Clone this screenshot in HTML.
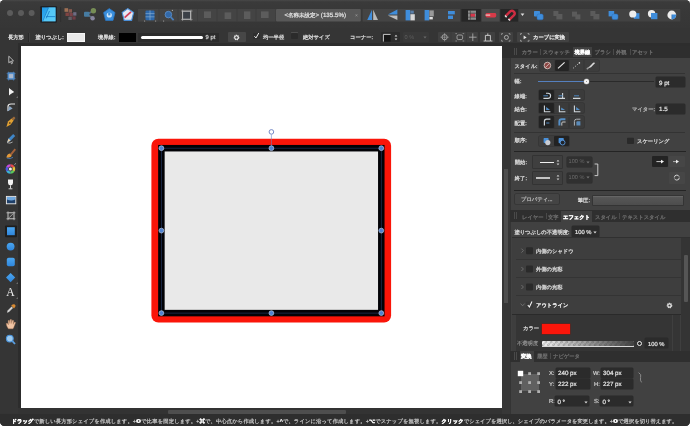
<!DOCTYPE html>
<html lang="ja"><head><meta charset="utf-8"><title>Affinity Designer</title>
<style>
html,body{margin:0;padding:0;background:#fff;}
body{width:690px;height:426px;overflow:hidden;position:relative;font-family:"Liberation Sans",sans-serif;}
#win{position:absolute;left:0;top:0;width:690px;height:426px;border-radius:4.5px;background:#343434;overflow:hidden;opacity:0.999;will-change:transform;}
.a{position:absolute;}
.t{position:absolute;white-space:nowrap;font-size:5.3px;line-height:8px;height:8px;color:#dadada;letter-spacing:0px;text-rendering:geometricPrecision;-webkit-text-stroke:0.26px currentColor;-webkit-font-smoothing:antialiased;}
.n{position:absolute;white-space:nowrap;font-size:6.2px;line-height:8px;height:8px;color:#e8e8e8;-webkit-text-stroke:0.2px currentColor;text-rendering:geometricPrecision;}
.b{font-weight:bold;color:#fff;}
.dim{color:#8a8a8a;}
.fld{position:absolute;background:#2b2b2b;border-radius:1px;box-shadow:0 0 0 0.5px #2a2a2a;}
.btn{position:absolute;background:#474747;border-radius:1px;}
.sel{position:absolute;background:#222;border-radius:1px;}
.sep{position:absolute;height:1px;background:#262626;}
svg{position:absolute;overflow:visible;}
</style></head><body>
<div id="win">

<!-- ===== top toolbar ===== -->
<div class="a" id="top" style="left:0;top:0;width:690px;height:28px;background:linear-gradient(#484848,#3a3a3a 7%,#383838 40%,#363636);"></div>
<div class="a" id="ctx" style="left:0;top:28px;width:690px;height:18px;background:#353535;"></div>

<!-- top toolbar content -->
<svg id="topicons" style="left:0;top:0;" width="690" height="28" viewBox="0 0 690 28">
  <!-- traffic lights -->
  <circle cx="10" cy="13" r="3" fill="#5b5b5b"/><circle cx="21" cy="13" r="3" fill="#5b5b5b"/><circle cx="31.6" cy="13" r="3" fill="#5b5b5b"/>
  <!-- designer persona -->
  <rect x="40.2" y="6" width="16.8" height="16.8" rx="1.2" fill="#1f2226"/>
  <defs><linearGradient id="gA" x1="0" y1="0" x2="1" y2="1"><stop offset="0" stop-color="#1f98e6"/><stop offset="1" stop-color="#4cc4f6"/></linearGradient></defs>
  <rect x="42" y="7.4" width="13.5" height="13.9" fill="url(#gA)"/>
  <path d="M48.6 7.4 L55.5 7.4 L55.5 21.3 L42 21.3 Z" fill="#5fd0fa" opacity="0.75"/>
  <path d="M48.6 7.4 L42.6 21.3 M46 16.6 L55.5 16.6 M49.5 11 L46.2 18.4" stroke="#1678c8" stroke-width="0.8" fill="none"/>
  <line x1="60.6" y1="7" x2="60.6" y2="22" stroke="#2b2b2b" stroke-width="0.7"/>
  <!-- pixel persona -->
  <g opacity="0.68">
    <rect x="64.5" y="8.2" width="3.6" height="3.6" fill="#d08b62"/><rect x="68.6" y="9.2" width="3.4" height="3.4" fill="#b06a5a"/>
    <rect x="65.5" y="12.6" width="3.4" height="3.4" fill="#a24a48"/><rect x="69.4" y="13" width="3.4" height="3.4" fill="#9a4a52"/><rect x="73.2" y="12.2" width="3.2" height="3.4" fill="#8a86a8"/>
    <rect x="68.4" y="16.8" width="3.4" height="3.2" fill="#77727c"/><rect x="72.4" y="16.4" width="3.2" height="3.2" fill="#8c3f4c"/>
  </g>
  <!-- export persona -->
  <g opacity="0.72">
    <path d="M87 14.3 L93 11 M87 14.3 L92.6 18.2" stroke="#6a7f9a" stroke-width="1.6"/>
    <rect x="84" y="11.8" width="5.4" height="5" rx="1" fill="#4d97cc"/><circle cx="93.4" cy="10.8" r="2.7" fill="#8fae62"/><circle cx="92.6" cy="18.2" r="2.2" fill="#a7a4c8"/>
  </g>
  <!-- pentagon icons -->
  <g>
    <path d="M109.3 8.6 L115 12.6 L113 20.4 L105.6 20.4 L103.6 12.6 Z" fill="#3b8fdc" stroke="#2a76c4" stroke-width="0.8"/>
    <circle cx="109.3" cy="15" r="2.6" fill="#cfe6fa"/><rect x="108.2" y="12.4" width="2.2" height="3" fill="#3b8fdc"/>
    <path d="M127.8 8.6 L133.6 12.6 L131.6 20.4 L124.2 20.4 L122.2 12.6 Z" fill="#e6e8f2" stroke="#4b8fd8" stroke-width="1.1"/>
    <path d="M124.6 17.6 L131 11.8" stroke="#d2405a" stroke-width="1.8"/>
  </g>
  <!-- group strip 1 -->
  <rect x="138" y="9" width="137.6" height="12.6" fill="#444444"/>
  <g stroke="#3a3a3a" stroke-width="0.6"><line x1="159" y1="9" x2="159" y2="21.6"/><line x1="178" y1="9" x2="178" y2="21.6"/><line x1="197.5" y1="9" x2="197.5" y2="21.6"/><line x1="217" y1="9" x2="217" y2="21.6"/><line x1="237" y1="9" x2="237" y2="21.6"/><line x1="256" y1="9" x2="256" y2="21.6"/></g>
  <g opacity="0.85">
    <rect x="145.5" y="10.4" width="9" height="9.8" rx="1" fill="#2a6fbe"/><path d="M150 10.4 V20.2 M145.5 13.6 H154.5 M145.5 16.8 H154.5" stroke="#8fbce8" stroke-width="0.7"/>
    <circle cx="144.6" cy="21" r="0.6" fill="#bbb"/><circle cx="155.6" cy="21" r="0.6" fill="#bbb"/>
    <circle cx="168.4" cy="14.6" r="3.3" fill="#2f70bc" stroke="#5f9add" stroke-width="0.9"/><path d="M170.8 17.2 L173.6 20.2" stroke="#4a88d0" stroke-width="1.7"/><circle cx="163.6" cy="21" r="0.6" fill="#bbb"/><circle cx="172.4" cy="10.4" r="0.6" fill="#bbb"/>
    <rect x="182.6" y="11.2" width="8" height="8" fill="#3a4048" stroke="#d0d0d0" stroke-width="0.9"/><path d="M181 11 H192.6 M181 19.4 H192.6 M182.6 9.6 V21 M191 9.6 V21" stroke="#cfcfcf" stroke-width="0.5"/>
  </g>
  <g fill="#5c5c5c">
    <rect x="204" y="11.4" width="7" height="6.6"/><rect x="224.6" y="12.4" width="6.6" height="6.6"/><rect x="244" y="11.4" width="6.4" height="7.6"/><rect x="261" y="11.4" width="7.6" height="6.6"/>
  </g>
  <!-- title tab -->
  <rect x="276" y="9" width="84.8" height="12.6" rx="1" fill="#585858"/>
  <!-- group strip 2 -->
  <rect x="362.6" y="9" width="97.6" height="12.6" fill="#444444"/>
  <g>
    <path d="M372 9.8 L372 20 L367.2 20 Z" fill="#3f8ddb"/><path d="M373.2 9.8 L373.2 20 L378 20 Z" fill="#b9b9b9"/>
    <path d="M397.4 9.6 L397.4 14.4 L387.8 14.4 Z" fill="#3f8ddb"/><path d="M397.4 15.4 L397.4 20 L387.8 15.4 Z" fill="#bdbdbd"/>
    <rect x="405.6" y="10" width="4.6" height="10.4" fill="#3f8ddb"/><rect x="410.4" y="14.2" width="4.4" height="6.2" fill="#d8d8d8"/><rect x="410.4" y="10.6" width="3.4" height="3" fill="#5a7fa8"/>
    <rect x="424.6" y="10" width="4.6" height="10.4" fill="#3f8ddb"/><rect x="429.4" y="10.4" width="4.4" height="6" fill="#9a9a9a"/><rect x="429.4" y="17" width="3.4" height="2.4" fill="#e0e0e0"/>
    <rect x="448" y="11" width="6.8" height="3.4" fill="#3f8ddb"/><rect x="448" y="15.6" width="5" height="3.4" fill="#3f8ddb"/>
  </g>
  <!-- snapping buttons -->
  <rect x="461.4" y="9" width="19.4" height="12.6" fill="#262626"/>
  <rect x="468" y="10.6" width="8" height="9.2" fill="#8b8b8b"/><rect x="470" y="13.6" width="5" height="3.2" fill="#d8364a"/><path d="M468 13.2 H476 M468 17.2 H476 M470.4 10.6 V19.8" stroke="#3a3a3a" stroke-width="0.6"/>
  <rect x="481.6" y="9" width="18" height="12.6" fill="#4a4a4a"/>
  <rect x="485.6" y="13" width="10.6" height="4.4" rx="1.4" fill="#d63a48"/><rect x="485.6" y="14.4" width="4.6" height="1.4" fill="#e9b6b6"/>
  <rect x="500.4" y="9" width="17.6" height="12.6" fill="#262626"/>
  <path d="M506.4 18.6 L511.6 12.6 A2.6 2.6 0 0 0 507.6 9.8" stroke="none" fill="none"/>
  <path d="M505.6 16.2 L510.2 11.4 A2.7 2.7 0 0 1 514 15.2 L509.2 19.8" stroke="#cf2d42" stroke-width="2.4" fill="none"/>
  <path d="M505 15.6 L506.6 17.2 M508.4 19 L510 20.6" stroke="#e8e8e8" stroke-width="1.4"/>
  <rect x="518.8" y="9" width="161.6" height="12.6" fill="#424242"/>
  <path d="M520.6 13.6 H524.4 L522.5 16 Z" fill="#e0e0e0"/>
  <g>
    <rect x="534" y="11" width="6" height="5.6" rx="0.8" fill="#3f8ddb"/><rect x="537" y="14" width="6.2" height="5.8" rx="1.6" fill="#3f8ddb" stroke="#2a6db8" stroke-width="0.5"/>
    <rect x="608.6" y="11" width="5.6" height="5.4" fill="#3f8ddb"/><rect x="612" y="14" width="6" height="5.6" rx="1.6" fill="#3f8ddb" stroke="#2a6db8" stroke-width="0.5"/>
  </g>
  <g fill="#5b5b5b"><rect x="553.4" y="11" width="5" height="5"/><rect x="556.4" y="14" width="6" height="5.4"/><rect x="572" y="11.6" width="5" height="5"/><rect x="575.4" y="14.4" width="5" height="5"/><rect x="590.4" y="11" width="5" height="5"/><rect x="593.4" y="14" width="6" height="5.4"/></g>
  <g>
    <rect x="633.8" y="13.2" width="5.6" height="5.6" fill="#3f8ddb"/><circle cx="632.8" cy="14" r="3.6" fill="#ececec"/>
    <circle cx="651.6" cy="13.8" r="3.7" fill="#ececec"/><rect x="651" y="13" width="6.4" height="6.2" fill="#3f8ddb"/>
    <circle cx="671.8" cy="15" r="4.4" fill="#ececec"/><path d="M671.8 14.6 H676.2 A4.4 4.4 0 0 1 671.8 19.4 Z" fill="#3f8ddb"/><path d="M671.8 14.6 V19.4" stroke="#2a5f98" stroke-width="0.5"/>
  </g>
</svg>
<div class="n" style="left:284.4px;top:11.9px;font-size:6.2px;color:#e6e6e6;">&lt;<span style="font-size:5.5px">名称未設定</span>&gt; (135.5%)</div>
<div class="n" style="left:355px;top:11.6px;font-size:5px;color:#a5a5a5;-webkit-text-stroke:0;">×</div>


<!-- context toolbar content -->
<div class="t" style="left:8px;top:34px;color:#e0e0e0;">長方形</div>
<div class="a" style="left:28px;top:32.5px;width:0.6px;height:9px;background:#2a2a2a;"></div><div class="a" style="left:28.6px;top:32.5px;width:0.5px;height:9px;background:#404040;"></div>
<div class="t" style="left:35.4px;top:34px;color:#e0e0e0;">塗りつぶし:</div>
<div class="a" style="left:67px;top:32.8px;width:17.6px;height:9.1px;background:#e9e9e9;box-shadow:inset 0 0 0 0.7px #fafafa;"></div>
<div class="t" style="left:98px;top:34px;color:#e0e0e0;">境界線:</div>
<div class="a" style="left:119.4px;top:32.9px;width:16.7px;height:9px;background:#000;"></div>
<div class="a" style="left:137.6px;top:32.8px;width:81px;height:9.2px;background:#2c2c2c;"></div>
<div class="a" style="left:141px;top:35.8px;width:62.4px;height:3.2px;border-radius:1.6px;background:#fff;"></div>
<div class="n" style="left:205.6px;top:34.1px;font-size:5.8px;color:#dcdcdc;">9 pt</div>
<div class="btn" style="left:228.4px;top:32.4px;width:17.4px;height:9.4px;background:#474747;"></div>
<svg style="left:233.2px;top:33.6px;" width="7" height="7" viewBox="0 0 10 10"><circle cx="5" cy="5" r="2.9" fill="none" stroke="#e6e6e6" stroke-width="2.2" stroke-dasharray="1.5 0.78"/><circle cx="5" cy="5" r="2.6" fill="none" stroke="#e6e6e6" stroke-width="1.3"/></svg>
<div class="a" style="left:253px;top:32.6px;width:6.6px;height:6.6px;background:#2e2e2e;border-radius:1px;"></div>
<svg style="left:253.4px;top:31.8px;" width="7" height="7.4" viewBox="0 0 8 8"><path d="M1.6 4.6 L3.4 6.6 L6.6 1" fill="none" stroke="#f2f2f2" stroke-width="1.1"/></svg>
<div class="t" style="left:263px;top:34px;color:#dedede;">均一半径</div>
<div class="a" style="left:291px;top:32.4px;width:7.4px;height:6.6px;background:#2b2b2b;border-radius:1px;box-shadow:inset 0 0.8px 0 #5a5a5a;"></div>
<div class="t" style="left:303px;top:34px;color:#dedede;">絶対サイズ</div>
<div class="t" style="left:350px;top:34px;color:#dedede;">コーナー:</div>
<div class="a" style="left:380.6px;top:32px;width:19px;height:10.4px;background:#2c2c2c;border-radius:1px;"></div>
<svg style="left:382.6px;top:33.6px;" width="8" height="8" viewBox="0 0 8 8"><rect x="0.4" y="0.4" width="7.2" height="7.2" fill="#161616"/><path d="M0.4 7.6 V0.4 H7.6" fill="none" stroke="#d8d8d8" stroke-width="0.9"/></svg>
<svg style="left:393.6px;top:34.2px;" width="4" height="7" viewBox="0 0 4 7"><path d="M0.6 2.6 L2 0.8 L3.4 2.6 Z M0.6 4.4 L2 6.2 L3.4 4.4 Z" fill="#d8d8d8"/></svg>
<div class="a" style="left:402.6px;top:32.4px;width:26.4px;height:9.6px;background:#393939;border-radius:1px;"></div>
<div class="n" style="left:404.6px;top:34px;font-size:5.6px;color:#606060;-webkit-text-stroke:0;">0 %</div>
<svg style="left:422.6px;top:36.4px;" width="4" height="3" viewBox="0 0 4 3"><path d="M0.4 0.4 H3.6 L2 2.6 Z" fill="#6a6a6a"/></svg>
<div class="btn" style="left:437.6px;top:32.4px;width:40.4px;height:9.6px;background:#404040;"></div>
<svg style="left:437.6px;top:32px;" width="42" height="10.4" viewBox="0 0 42 10.4"><g fill="none" stroke="#b4b4b4" stroke-width="0.8"><circle cx="6.6" cy="5.2" r="2.6"/><path d="M6.6 1 V9.4 M2.4 5.2 H10.8" stroke-width="0.5"/><rect x="19" y="3" width="5.6" height="4.6" rx="1.4"/><path d="M17.4 1.6 H19 M24.6 1.6 H26.2 M17.4 9 H19 M24.6 9 H26.2" stroke-width="0.6"/><path d="M34.8 1.4 V9 M31 5.2 H38.6" /><path d="M13 0 V10.4 M28.4 0 V10.4" stroke="#363636" stroke-width="0.6"/></g></svg>
<div class="btn" style="left:480.4px;top:32.4px;width:14.4px;height:9.6px;background:#404040;"></div>
<svg style="left:482.6px;top:33px;" width="10" height="9" viewBox="0 0 10 9"><path d="M2.4 2.4 H7.4 V8 H2.4 Z M4.8 0.4 V2.4 M0.6 8 H2.4 M7.4 8 H9.4" fill="none" stroke="#d0d0d0" stroke-width="0.9"/></svg>
<div class="btn" style="left:499px;top:32.4px;width:14px;height:9.6px;background:#404040;"></div>
<svg style="left:501.4px;top:33px;" width="10" height="9" viewBox="0 0 10 9"><circle cx="5.4" cy="4.4" r="2" fill="none" stroke="#c4c4c4" stroke-width="0.8"/><path d="M0.6 2 V0.6 H2 M7.6 0.6 H9 V2 M9 6.8 V8.2 H7.6 M2 8.2 H0.6 V6.8" fill="none" stroke="#bdbdbd" stroke-width="0.6"/></svg>
<div class="btn" style="left:517px;top:32.4px;width:52.4px;height:9.6px;background:#424242;"></div>
<svg style="left:520px;top:33px;" width="10" height="9" viewBox="0 0 10 9"><path d="M0.6 2 V0.6 H2 M7.6 0.6 H9 V2 M9 6.8 V8.2 H7.6 M2 8.2 H0.6 V6.8" fill="none" stroke="#cfcfcf" stroke-width="0.6"/><path d="M3.6 2.6 L6.6 4.4 L3.6 6.2 Z" fill="#e6e6e6"/></svg>
<div class="t" style="left:533px;top:34px;color:#ececec;">カーブに変換</div>

<!-- ===== canvas ===== -->
<div class="a" id="canvas" style="left:21.2px;top:45.5px;width:480.8px;height:362.5px;background:#fff;"></div>
<svg id="shape" style="left:0;top:0;" width="690" height="426" viewBox="0 0 690 426">
  <rect x="151.4" y="138.7" width="239.7" height="183.9" rx="7" fill="#fa1509"/>
  <rect x="161.4" y="148.2" width="219.9" height="164.9" fill="#e9e9e9" stroke="#020206" stroke-width="6.5"/>
  <rect x="161.4" y="148.2" width="219.9" height="164.9" fill="none" stroke="#1e2f50" stroke-width="0.8"/>
  <line x1="271.4" y1="134.5" x2="271.4" y2="148" stroke="#6f86c4" stroke-width="0.6"/>
  <circle cx="271.4" cy="131.9" r="2.3" fill="#fff" stroke="#7488c6" stroke-width="1"/>
  <g fill="#4f82d0" stroke="#b9c8e6" stroke-width="0.7">
    <circle cx="161.4" cy="148.2" r="2.4"/><circle cx="271.4" cy="148.2" r="2.4"/><circle cx="381.3" cy="148.2" r="2.4"/>
    <circle cx="161.4" cy="230.6" r="2.4"/><circle cx="381.3" cy="230.6" r="2.4"/>
    <circle cx="161.4" cy="313.1" r="2.4"/><circle cx="271.4" cy="313.1" r="2.4"/><circle cx="381.3" cy="313.1" r="2.4"/>
  </g>
</svg>

<!-- ===== left tools ===== -->
<div class="a" id="tools" style="left:0;top:46px;width:21px;height:367px;background:#353535;"></div><div class="a" style="left:17.6px;top:43px;width:3.6px;height:370px;background:#2c2c2c;"></div><div class="a" style="left:17.6px;top:42.8px;width:672.4px;height:2.8px;background:#2d2d2d;"></div>
<svg id="toolicons" style="left:0;top:46px;" width="21" height="367" viewBox="0 46 21 367">
  <!-- move -->
  <path d="M8.8 56.2 L8.8 62.8 L10.4 61.4 L11.5 63.8 L12.6 63.2 L11.5 61 L13.5 60.8 Z" fill="#2c2c2c" stroke="#e0e0e0" stroke-width="0.75" stroke-linejoin="round"/>
  <!-- artboard -->
  <rect x="7.6" y="72.4" width="7" height="7.2" fill="#5c98d8"/><rect x="8.8" y="73.8" width="4.6" height="4.6" fill="#aab8cc"/>
  <path d="M6.6 73.6 H15.6 M6.6 78.6 H15.6 M8.6 71.6 V80.6 M13.6 71.6 V80.6" stroke="#4a86c4" stroke-width="0.6"/>
  <!-- node -->
  <path d="M9 88 L9 95.6 L10.8 93.9 L14.2 92 Z" fill="#f0f0f0"/><path d="M16 98 H18 V96 Z" fill="#6a6a6a"/>
  <!-- corner -->
  <path d="M8 111 L8 106.4 Q8 104 11 104 L15 104" fill="none" stroke="#e6e6e6" stroke-width="1.2"/><path d="M7.4 111.4 L9.6 106 L12.6 108.4 Z" fill="#8aa6c4"/>
  <!-- pen -->
  <path d="M6.4 127 L8 121.6 L11.6 118.6 L13.6 120.6 L10.8 124.6 Z" fill="#e0a032"/><path d="M11.6 118.6 L14 116.6 L15.4 118 L13.6 120.6 Z" fill="#9a6a3a"/><circle cx="9.8" cy="123" r="0.9" fill="#6a4a20"/>
  <!-- pencil -->
  <path d="M7 142.6 L8.6 138.6 L13.2 134 L15.2 136 L10.6 140.8 Z" fill="#3f86c8"/><path d="M7 142.6 L8.6 138.6 L10.6 140.8 Z" fill="#e8d2b0"/><path d="M7 142.6 Q10 144 12.6 142" stroke="#d8d8d8" stroke-width="0.7" fill="none"/>
  <!-- brush -->
  <path d="M10 154 L14.6 148.4 L16 149.8 L11.4 155.4 Z" fill="#a4623a"/><path d="M6.4 157.6 Q7 154 9.6 153.6 L11.6 155.6 Q11 158 6.4 157.6 Z" fill="#e49a3a"/><path d="M6.8 158 Q10 159.4 13 157.4" stroke="#4a7ab4" stroke-width="0.9" fill="none"/>
  <!-- fill (colour wheel) -->
  <circle cx="10.4" cy="169" r="4.7" fill="#444"/>
  <g stroke-width="2.4" fill="none">
    <path d="M10.4 165.4 A3.6 3.6 0 0 1 13.5 167.2" stroke="#e84a4a"/><path d="M13.5 167.2 A3.6 3.6 0 0 1 13.5 170.8" stroke="#e8c23a"/><path d="M13.5 170.8 A3.6 3.6 0 0 1 10.4 172.6" stroke="#5ac85a"/>
    <path d="M10.4 172.6 A3.6 3.6 0 0 1 7.3 170.8" stroke="#3ab4d8"/><path d="M7.3 170.8 A3.6 3.6 0 0 1 7.3 167.2" stroke="#4a5ae0"/><path d="M7.3 167.2 A3.6 3.6 0 0 1 10.4 165.4" stroke="#c84ad8"/>
  </g><circle cx="10.4" cy="169" r="1.5" fill="#f0f0f0"/><path d="M14.4 164.6 L16 163.4" stroke="#b8b8b8" stroke-width="0.8"/>
  <!-- transparency (glass) -->
  <path d="M8 179.6 H13 V183 Q13 185.4 10.5 185.4 Q8 185.4 8 183 Z" fill="#f2f2f2"/><path d="M10.5 185.4 V188.4 M8.6 188.8 H12.4" stroke="#e6e6e6" stroke-width="0.9"/>
  <!-- place image -->
  <rect x="6.4" y="196.4" width="9.4" height="7.4" fill="#1f3f68" stroke="#ececec" stroke-width="0.9"/><path d="M7 197 H15.2 V199.6 Q11 201.6 7 199.4 Z" fill="#6fa8e0"/>
  <!-- crop -->
  <rect x="8" y="212.8" width="6" height="6" fill="#3a3a3a" stroke="#d6d6d6" stroke-width="0.9"/><path d="M6.4 212.8 H8 M14 212.8 H15.4 M6.4 218.8 H8 M14 218.8 H15.4 M8 211.4 V212.8 M14 211.4 V212.8 M8 218.8 V220.2 M14 218.8 V220.2 M9 217.8 L13 213.8" stroke="#bdbdbd" stroke-width="0.8"/>
  <!-- rectangle (selected) -->
  <rect x="5" y="225.4" width="12" height="11.8" rx="1" fill="#1e1e1e"/>
  <defs><linearGradient id="gB" x1="0" y1="0" x2="0" y2="1"><stop offset="0" stop-color="#4ba6f0"/><stop offset="1" stop-color="#2f86dc"/></linearGradient></defs>
  <rect x="7" y="227.2" width="7.8" height="8" fill="url(#gB)"/>
  <!-- ellipse -->
  <circle cx="10.6" cy="246.6" r="3.9" fill="url(#gB)"/>
  <!-- rounded rect -->
  <rect x="6.8" y="257.8" width="8" height="8.4" rx="1.8" fill="url(#gB)"/>
  <!-- diamond -->
  <path d="M10.6 273 L15.2 277.6 L10.6 282.2 L6 277.6 Z" fill="url(#gB)"/><path d="M16 284 H18 V282 Z" fill="#6a6a6a"/>
  <!-- text -->
  <path d="M16 299 H18 V297 Z" fill="#6a6a6a"/>
  <!-- eyedropper -->
  <path d="M7 312.8 L7.6 310.6 L11.6 306.6 L13 308 L9 312 Z" fill="#d2d2d2"/><path d="M11.2 305.6 L14 308.4 L15.4 306.6 Q15.8 305 14.8 304.4 Q13.6 303.8 12.6 304.6 Z" fill="#d88a32"/>
  <!-- hand -->
  <path d="M8.4 328.8 Q6.4 326 6.2 323.6 L7.4 323.2 L8.4 325 L8.2 320.6 L9.4 320.4 L10 323.6 L10.2 319.6 L11.4 319.6 L11.6 323.6 L12.4 320.2 L13.6 320.6 L13.2 324.4 L14.6 322 L15.6 322.6 L14 326.6 Q13.6 328.4 12.8 328.8 Z" fill="#f0c4a4" stroke="#c48a64" stroke-width="0.4"/>
  <!-- zoom -->
  <circle cx="9.8" cy="338.6" r="3.4" fill="#9ccaf0" stroke="#4a94dc" stroke-width="1.1"/><path d="M12.4 341.2 L15 344" stroke="#5a9ee0" stroke-width="1.8"/>
</svg>
<div class="a" style="left:6.2px;top:288.2px;font-family:'Liberation Serif',serif;font-size:11.6px;line-height:10px;color:#f2f2f2;">A</div>

<!-- ===== right gutter + panel ===== -->
<div class="a" id="gutter" style="left:502px;top:45.5px;width:8px;height:369px;background:#373737;"></div>
<div class="a" id="panel" style="left:510px;top:45.5px;width:180px;height:368.5px;background:#414141;"></div>
<div class="a" style="left:503.8px;top:168.8px;width:4px;height:134.7px;background:#4f4f4f;"></div><div class="a" style="left:509.6px;top:45.5px;width:0.6px;height:368px;background:#343434;"></div>

<!-- stroke panel tabs -->
<div class="a" style="left:502px;top:45.5px;width:188px;height:12px;background:#2e2e2e;"></div>
<div class="a" style="left:514px;top:48px;width:0.6px;height:7.4px;background:#4a4a4a;"></div><div class="a" style="left:515.6px;top:48px;width:0.6px;height:7.4px;background:#4a4a4a;"></div>
<div class="a" style="left:573.2px;top:46.6px;width:19px;height:10.7px;background:#414141;"></div>
<div class="t dim" style="left:521.7px;top:48.7px;color:#707070;">カラー</div>
<div class="t dim" style="left:542.8px;top:48.7px;color:#707070;">スウォッチ</div>
<div class="t b" style="left:574.4px;top:48.7px;">境界線</div>
<div class="t dim" style="left:594.6px;top:48.7px;color:#707070;">ブラシ</div>
<div class="t dim" style="left:616px;top:48.7px;color:#707070;">外観</div>
<div class="t dim" style="left:632px;top:48.7px;color:#707070;">アセット</div>
<div class="a" style="left:540px;top:49px;width:0.5px;height:6px;background:#4a4a4a;"></div><div class="a" style="left:613.4px;top:49px;width:0.5px;height:6px;background:#4a4a4a;"></div><div class="a" style="left:629.6px;top:49px;width:0.5px;height:6px;background:#4a4a4a;"></div>

<!-- style row -->
<div class="t" style="left:514.4px;top:62.9px;">スタイル:</div>
<div class="btn" style="left:540px;top:59.8px;width:59px;height:10.8px;background:#3d3d3d;box-shadow:0 0 0 0.6px #333;"></div>
<div class="sel" style="left:554.6px;top:59.6px;width:14px;height:11px;background:#242424;"></div>
<svg style="left:540px;top:59.6px;" width="59" height="11" viewBox="0 0 59 11">
  <circle cx="7.4" cy="5.5" r="3.3" fill="#8c4644" stroke="#d4c2bc" stroke-width="0.9"/><path d="M5.2 7.7 L9.6 3.3" stroke="#d4c2bc" stroke-width="0.9"/>
  <path d="M18 8.4 L24.6 2.4" stroke="#f0f0f0" stroke-width="1.1"/>
  <path d="M33 8.4 L39.2 3" stroke="#a8a8a8" stroke-width="1" stroke-dasharray="1.4 1.2"/><circle cx="39.4" cy="2.9" r="0.8" fill="#d8d8d8"/>
  <path d="M47.4 8.6 L50 6 L52.4 3.6 L54 2.2 L55 3.2 L53.4 4.8 L51 7.2 Z" fill="#dcdcdc"/><path d="M46.8 9.2 L48.8 7.2" stroke="#9a9a9a" stroke-width="1.4"/>
  <path d="M14.6 0 V11 M29.2 0 V11 M44 0 V11" stroke="#343434" stroke-width="0.6"/>
</svg>
<div class="sep" style="left:514px;top:73.4px;width:171px;height:0.7px;background:#333;"></div>

<!-- width row -->
<div class="t" style="left:514.6px;top:78px;">幅:</div>
<div class="a" style="left:538px;top:81.2px;width:116px;height:1px;background:#2a2a2a;"></div>
<div class="a" style="left:538px;top:80.6px;width:48px;height:1.8px;background:#5580bf;"></div>
<div class="a" style="left:584.2px;top:79px;width:5px;height:5px;border-radius:50%;background:#f4f4f4;box-shadow:0 0 0 0.4px #888;"></div><div class="a" style="left:585.9px;top:80.7px;width:1.6px;height:1.6px;border-radius:50%;background:#777;"></div>
<div class="fld" style="left:656px;top:77px;width:29px;height:10px;"></div>
<div class="n" style="left:659px;top:79.6px;">9 pt</div>

<!-- cap / join / align -->
<div class="t" style="left:514.6px;top:92.9px;">線端:</div>
<div class="t" style="left:514.6px;top:106.1px;">結合:</div>
<div class="t" style="left:514.6px;top:120px;">配置:</div>
<div class="btn" style="left:539px;top:90.2px;width:45px;height:10.2px;background:#3b3b3b;box-shadow:0 0 0 0.6px #2f2f2f;"></div><div class="sel" style="left:539px;top:90.2px;width:15px;height:10.2px;"></div>
<div class="btn" style="left:539px;top:103px;width:45px;height:10.4px;background:#3b3b3b;box-shadow:0 0 0 0.6px #2f2f2f;"></div><div class="sel" style="left:539px;top:103px;width:15px;height:10.4px;"></div>
<div class="btn" style="left:539px;top:116.4px;width:45px;height:11.4px;background:#3b3b3b;box-shadow:0 0 0 0.6px #2f2f2f;"></div><div class="sel" style="left:539px;top:116.4px;width:15px;height:11.4px;"></div>
<svg style="left:539px;top:90px;" width="45" height="38" viewBox="0 0 45 38">
  <g fill="none" stroke-linecap="butt">
    <!-- caps -->
    <path d="M4.4 8.4 H9 A2.6 2.6 0 0 0 9 3.2 H7" stroke="#cfd6dc" stroke-width="1.1"/><path d="M4.4 5.8 H9" stroke="#4c86c0" stroke-width="1"/>
    <path d="M19 8.4 H26 M23.6 3 V8.4" stroke="#cfd6dc" stroke-width="1.1"/><path d="M19.6 5.8 H23.6" stroke="#4c86c0" stroke-width="1"/>
    <path d="M34 8.4 H41.4" stroke="#cfd6dc" stroke-width="1.1"/><path d="M35 5.8 H40" stroke="#4c86c0" stroke-width="1"/>
    <!-- joins -->
    <path d="M5.4 15.4 V21.8 H11.4" stroke="#cfd6dc" stroke-width="1.1"/><path d="M7.2 17 L7.2 20 L11 20 Z" fill="#5590c8" stroke="none"/>
    <path d="M20.4 15.4 V21.8 H26.4" stroke="#cfd6dc" stroke-width="1.1"/><path d="M22.2 17.6 L22.2 20 L26 20 Z" fill="#5590c8" stroke="none"/>
    <path d="M35.4 15.4 V21.8 H41.4" stroke="#cfd6dc" stroke-width="1.1"/><path d="M37.2 17 L37.2 20 L41 20 Z" fill="#5590c8" stroke="none"/>
    <!-- align -->
    <path d="M5.4 35.6 V31.4 Q5.4 29.2 7.6 29.2 H11.4" stroke="#cfd6dc" stroke-width="1.2"/><path d="M7.2 33 H10.4" stroke="#4c86c0" stroke-width="1"/>
    <path d="M20.4 35.6 V31.4 Q20.4 29.2 22.6 29.2 H26.4" stroke="#5590c8" stroke-width="2"/><path d="M22.8 35.6 V33 Q22.8 32 23.8 32 H26.6" stroke="#d8d8d8" stroke-width="0.9"/>
    <path d="M35.4 35.6 V31.4 Q35.4 29.2 37.6 29.2 H41.4" stroke="#b0b4b8" stroke-width="1"/><path d="M37.4 35.6 V32.2 Q37.4 31.2 38.4 31.2 H41.4 V35.6 Z" fill="#5a8ab8" stroke="none"/>
  </g>
  <path d="M15 0 V10.4 M30 0 V10.4 M15 13.4 V23.8 M30 13.4 V23.8 M15 27.2 V37.6 M30 27.2 V37.6" stroke="#2c2c2c" stroke-width="0.6"/>
</svg>
<div class="t" style="left:632px;top:106.3px;color:#b4b4b4;">マイター:</div>
<div class="fld" style="left:656px;top:104px;width:29px;height:9.6px;"></div>
<div class="n" style="left:659px;top:106.4px;">1.5</div>
<div class="sep" style="left:514px;top:131.6px;width:171px;height:0.7px;background:#333;"></div>

<!-- order row -->
<div class="t" style="left:514.6px;top:137px;">順序:</div>
<div class="btn" style="left:539px;top:135.6px;width:30.4px;height:10.8px;background:#3d3d3d;box-shadow:0 0 0 0.6px #303030;"></div><div class="sel" style="left:554.2px;top:135.6px;width:15.2px;height:10.8px;"></div>
<svg style="left:539px;top:135.6px;" width="31" height="11" viewBox="0 0 31 11">
  <rect x="4.6" y="2" width="5" height="5" rx="0.8" fill="#4a90d8"/><circle cx="8.8" cy="6.6" r="2.6" fill="#c9ccd2"/>
  <rect x="19.6" y="2" width="5.2" height="5.2" rx="0.8" fill="#4a90d8"/><circle cx="23.6" cy="6.6" r="2.4" fill="#20242a" stroke="#5a9ae0" stroke-width="0.9"/>
</svg>
<div class="a" style="left:627px;top:137px;width:6.6px;height:6.8px;background:#2a2a2a;border-radius:1px;box-shadow:inset 0 0.5px 0 #4a4a4a;"></div>
<div class="t" style="left:637px;top:137.6px;">スケーリング</div>
<div class="sep" style="left:514px;top:150.6px;width:172px;height:0.9px;background:#242424;"></div>

<!-- start / end -->
<div class="t" style="left:514.8px;top:159.1px;">開始:</div>
<div class="t" style="left:514.8px;top:175.2px;">終了:</div>
<div class="a" style="left:532.6px;top:156px;width:29px;height:12px;background:#3f3f3f;box-shadow:0 0 0 0.6px #2b2b2b;"></div>
<div class="a" style="left:532.6px;top:171.6px;width:29px;height:12px;background:#3f3f3f;box-shadow:0 0 0 0.6px #2b2b2b;"></div>
<div class="a" style="left:540px;top:161.8px;width:14.4px;height:1.3px;background:#f0f0f0;"></div>
<div class="a" style="left:535.8px;top:177.1px;width:14.2px;height:1.6px;background:#c4c4c4;"></div>
<svg style="left:556.4px;top:158.6px;" width="4" height="7" viewBox="0 0 4 7"><path d="M0.6 2.6 L2 0.8 L3.4 2.6 Z M0.6 4.4 L2 6.2 L3.4 4.4 Z" fill="#cfcfcf"/></svg>
<svg style="left:556.4px;top:174.2px;" width="4" height="7" viewBox="0 0 4 7"><path d="M0.6 2.6 L2 0.8 L3.4 2.6 Z M0.6 4.4 L2 6.2 L3.4 4.4 Z" fill="#cfcfcf"/></svg>
<div class="fld" style="left:567px;top:157px;width:25.4px;height:10px;background:#303030;"></div>
<div class="fld" style="left:567px;top:172.8px;width:25.4px;height:10px;background:#303030;"></div>
<div class="n" style="left:568.6px;top:158.2px;font-size:5.6px;color:#6c6c6c;-webkit-text-stroke:0;">100 %</div>
<div class="n" style="left:568.6px;top:174px;font-size:5.6px;color:#6c6c6c;-webkit-text-stroke:0;">100 %</div>
<svg style="left:585.6px;top:160.6px;" width="4" height="3" viewBox="0 0 4 3"><path d="M0.4 0.4 H3.6 L2 2.6 Z" fill="#757575"/></svg>
<svg style="left:585.6px;top:176.4px;" width="4" height="3" viewBox="0 0 4 3"><path d="M0.4 0.4 H3.6 L2 2.6 Z" fill="#757575"/></svg>
<svg style="left:593.6px;top:163.4px;" width="6" height="14" viewBox="0 0 6 14"><path d="M0.6 1 H3.8 V12.6 H0.6" fill="none" stroke="#d8d8d8" stroke-width="0.9"/></svg>
<div class="sel" style="left:652px;top:156px;width:16.4px;height:11.2px;background:#232323;"></div>
<div class="btn" style="left:669px;top:156px;width:15.6px;height:11.2px;background:#464646;"></div>
<div class="btn" style="left:669px;top:171.6px;width:15.6px;height:12px;background:#464646;"></div>
<svg style="left:652px;top:156px;" width="33" height="28" viewBox="0 0 33 28">
  <path d="M4.4 5.6 H9.4" stroke="#dcdcdc" stroke-width="0.9"/><path d="M9 3.8 L12 5.6 L9 7.4 Z" fill="#f4f4f4"/>
  <path d="M21 5.6 H24.6" stroke="#bdbdbd" stroke-width="0.9"/><path d="M24 3.8 L27 5.6 L24 7.4 Z" fill="#f0f0f0"/>
  <circle cx="24.8" cy="21.6" r="2.5" fill="none" stroke="#e0e0e0" stroke-width="0.9" stroke-dasharray="6.6 1.2"/>
</svg>
<div class="sep" style="left:514px;top:189.6px;width:172px;height:0.9px;background:#242424;"></div>

<!-- properties / pressure -->
<div class="a" style="left:514.6px;top:194.4px;width:44px;height:10px;background:#444;border-radius:1px;box-shadow:0 0 0 0.6px #2e2e2e;"></div>
<div class="t" style="left:521px;top:196.2px;color:#b8b8b8;">プロパティ...</div>
<div class="t" style="left:577.8px;top:196.6px;">筆圧:</div>
<div class="a" style="left:592.8px;top:196.2px;width:90.4px;height:8.4px;background:linear-gradient(#6c6c6c,#565656 18%,#4d4d4d);box-shadow:0 0 0 0.6px #2c2c2c;"></div>


<!-- effects tabs -->
<div class="a" style="left:510px;top:209.6px;width:180px;height:12.4px;background:#2f2f2f;"></div>
<div class="a" style="left:514px;top:212px;width:0.6px;height:7.4px;background:#4a4a4a;"></div><div class="a" style="left:515.6px;top:212px;width:0.6px;height:7.4px;background:#4a4a4a;"></div>
<div class="a" style="left:561px;top:210.6px;width:31px;height:11.4px;background:#414141;"></div>
<div class="t" style="left:522px;top:213.5px;color:#6e6e6e;">レイヤー</div>
<div class="t" style="left:548px;top:213.5px;color:#6e6e6e;">文字</div>
<div class="t b" style="left:563px;top:213.5px;">エフェクト</div>
<div class="t" style="left:595px;top:213.5px;color:#6e6e6e;">スタイル</div>
<div class="t" style="left:622px;top:213.5px;color:#6e6e6e;">テキストスタイル</div>
<div class="a" style="left:545.6px;top:213px;width:0.5px;height:6px;background:#4a4a4a;"></div><div class="a" style="left:619px;top:213px;width:0.5px;height:6px;background:#4a4a4a;"></div>

<!-- fill opacity -->
<div class="t" style="left:514.4px;top:228.7px;">塗りつぶしの不透明度:</div>
<div class="fld" style="left:572px;top:226px;width:27.4px;height:10.6px;"></div>
<div class="n" style="left:575px;top:228.7px;font-size:5.8px;">100 %</div>
<svg style="left:593px;top:230.6px;" width="4" height="3" viewBox="0 0 4 3"><path d="M0.4 0.4 H3.6 L2 2.6 Z" fill="#e0e0e0"/></svg>

<!-- effects list -->
<div class="a" style="left:512px;top:237px;width:169px;height:113.6px;background:#3e3e3e;"></div>
<div class="a" style="left:681px;top:237px;width:9px;height:113.6px;background:#343434;"></div>
<div class="a" style="left:684.2px;top:255px;width:4.2px;height:47.4px;background:#555;border-radius:1px;"></div>
<div class="a" style="left:512px;top:236.6px;width:178px;height:0.8px;background:#303030;"></div>
<div class="sep" style="left:516px;top:259px;width:165px;height:0.8px;background:#343434;"></div>
<div class="sep" style="left:516px;top:277px;width:165px;height:0.8px;background:#343434;"></div>
<div class="sep" style="left:516px;top:295px;width:165px;height:0.8px;background:#343434;"></div>
<div class="sep" style="left:512px;top:313.6px;width:169px;height:0.9px;background:#2a2a2a;"></div>
<svg style="left:519.6px;top:240.4px;" width="16" height="72" viewBox="0 0 16 72">
  <g fill="none" stroke="#777" stroke-width="0.8"><path d="M1.4 8.6 L3.4 10.6 L1.4 12.6"/><path d="M1.4 27 L3.4 29 L1.4 31"/><path d="M1.4 45 L3.4 47 L1.4 49"/><path d="M0.6 63.6 L2.6 65.8 L4.6 63.6"/></g>
  <g fill="#2a2a2a"><rect x="6" y="7.2" width="7" height="7" rx="1"/><rect x="6" y="25.6" width="7" height="7" rx="1"/><rect x="6" y="43.6" width="7" height="7" rx="1"/><rect x="6" y="61.6" width="7" height="7" rx="1" fill="#383838"/></g>
  <path d="M7.8 65 L9.4 67 L12 61.6" fill="none" stroke="#f4f4f4" stroke-width="1.1"/>
</svg>
<div class="t" style="left:536px;top:247.8px;">内側のシャドウ</div>
<div class="t" style="left:536px;top:266px;">外側の光彩</div>
<div class="t" style="left:536px;top:284px;">内側の光彩</div>
<div class="t b" style="left:536px;top:301.8px;font-weight:normal;">アウトライン</div>
<svg style="left:665.6px;top:301.8px;" width="7" height="7" viewBox="0 0 10 10"><circle cx="5" cy="5" r="2.9" fill="none" stroke="#dadada" stroke-width="2.2" stroke-dasharray="1.5 0.78"/><circle cx="5" cy="5" r="2.4" fill="none" stroke="#dadada" stroke-width="1.6"/></svg>
<!-- outline sub panel -->
<div class="a" style="left:516px;top:314.5px;width:165px;height:36px;background:#353535;"></div><div class="a" style="left:680px;top:314.5px;width:0.6px;height:36px;background:#3f3f3f;"></div>
<div class="a" style="left:672px;top:314.5px;width:0.6px;height:36px;background:#3f3f3f;"></div>
<div class="t" style="left:523px;top:325.3px;">カラー</div>
<div class="a" style="left:542px;top:323.7px;width:28px;height:10.4px;background:#fb160a;box-shadow:0 0 0 0.5px #7a1a12;"></div>
<div class="t" style="left:517px;top:340.1px;color:#9a9a9a;-webkit-text-stroke:0.15px currentColor;">不透明度</div>
<div class="a" id="chk" style="left:542px;top:340.6px;width:92.4px;height:5.2px;border-radius:1px;background-color:#f2f2f2;background-image:linear-gradient(45deg,#bdbdbd 25%,transparent 25%,transparent 75%,#bdbdbd 75%),linear-gradient(45deg,#bdbdbd 25%,transparent 25%,transparent 75%,#bdbdbd 75%);background-size:5.2px 5.2px;background-position:0 0,2.6px 2.6px;"></div>
<div class="a" style="left:542px;top:340.6px;width:92.4px;height:5.2px;border-radius:1px;background:linear-gradient(90deg,rgba(60,60,60,0) 0%,rgba(52,52,52,0.55) 60%,rgba(52,52,52,0.92) 100%);"></div>
<div class="a" style="left:542px;top:345.6px;width:92.4px;height:0.7px;background:#d8d8d8;"></div>
<div class="a" style="left:636.6px;top:340.6px;width:3.6px;height:3.6px;border-radius:50%;border:0.9px solid #f2f2f2;background:#2a2a2a;"></div>
<div class="fld" style="left:645px;top:338px;width:23.4px;height:10px;"></div>
<div class="n" style="left:648px;top:340.8px;font-size:5.8px;">100 %</div>

<!-- transform tabs -->
<div class="a" style="left:510px;top:350.6px;width:180px;height:11px;background:#2f2f2f;"></div>
<div class="a" style="left:514px;top:352.4px;width:0.6px;height:7.4px;background:#4a4a4a;"></div><div class="a" style="left:515.6px;top:352.4px;width:0.6px;height:7.4px;background:#4a4a4a;"></div>
<div class="a" style="left:519.6px;top:351.4px;width:14.4px;height:10.2px;background:#414141;"></div>
<div class="t b" style="left:521px;top:353.3px;">変換</div>
<div class="t" style="left:537px;top:353.3px;color:#6e6e6e;">履歴</div>
<div class="t" style="left:553px;top:353.3px;color:#6e6e6e;">ナビゲータ</div>
<div class="a" style="left:550.4px;top:353.4px;width:0.5px;height:6px;background:#4a4a4a;"></div>

<!-- transform body -->
<div class="a" style="left:521px;top:374px;width:17.6px;height:17px;background:#606060;"></div>
<svg style="left:516px;top:369px;" width="27" height="27" viewBox="516 369 27 27">
  <g fill="#b0b0b0"><rect x="528.2" y="372.2" width="2.8" height="2.8"/><rect x="537.2" y="372.2" width="2.8" height="2.8"/>
  <rect x="519.2" y="381.2" width="2.8" height="2.8"/><rect x="528.2" y="381.2" width="2.8" height="2.8"/><rect x="537.2" y="381.2" width="2.8" height="2.8"/>
  <rect x="519.2" y="390.2" width="2.8" height="2.8"/><rect x="528.2" y="390.2" width="2.8" height="2.8"/><rect x="537.2" y="390.2" width="2.8" height="2.8"/></g>
  <rect x="517.8" y="370.8" width="5.4" height="5.4" fill="#ffffff"/>
</svg>
<div class="n" style="left:549px;top:369.6px;font-size:5.8px;color:#cfcfcf;">X:</div>
<div class="n" style="left:549px;top:380.8px;font-size:5.8px;color:#cfcfcf;">Y:</div>
<div class="n" style="left:593px;top:369.6px;font-size:5.8px;color:#cfcfcf;">W:</div>
<div class="n" style="left:594px;top:380.8px;font-size:5.8px;color:#cfcfcf;">H:</div>
<div class="n" style="left:549px;top:398.2px;font-size:5.8px;color:#cfcfcf;">R:</div>
<div class="n" style="left:594px;top:398.2px;font-size:5.8px;color:#cfcfcf;">S:</div>
<div class="fld" style="left:556px;top:368px;width:34.4px;height:10px;"></div>
<div class="fld" style="left:556px;top:379.2px;width:34.4px;height:10px;"></div>
<div class="fld" style="left:601px;top:368px;width:32.4px;height:10px;"></div>
<div class="fld" style="left:601px;top:379.2px;width:32.4px;height:10px;"></div>
<div class="fld" style="left:555px;top:396px;width:34.4px;height:10px;"></div>
<div class="fld" style="left:600px;top:396px;width:33.4px;height:10px;"></div>
<div class="n" style="left:558px;top:370.1px;">240 px</div>
<div class="n" style="left:558px;top:381.4px;">222 px</div>
<div class="n" style="left:603px;top:370.1px;">304 px</div>
<div class="n" style="left:603px;top:381.4px;">227 px</div>
<div class="n" style="left:557.4px;top:398.5px;">0 °</div>
<div class="n" style="left:602.4px;top:398.5px;">0 °</div>
<svg style="left:583.6px;top:400.6px;" width="4" height="3" viewBox="0 0 4 3"><path d="M0.4 0.4 H3.6 L2 2.6 Z" fill="#e0e0e0"/></svg>
<svg style="left:627.6px;top:400.6px;" width="4" height="3" viewBox="0 0 4 3"><path d="M0.4 0.4 H3.6 L2 2.6 Z" fill="#e0e0e0"/></svg>
<svg style="left:636px;top:371px;" width="8" height="13" viewBox="0 0 8 13"><path d="M2.6 1.6 Q5.8 3.4 4.6 6.4 Q3.8 9.4 5.6 11.4" fill="none" stroke="#8a8a8a" stroke-width="1"/></svg>

<!-- ===== bottom ===== -->
<div class="a" id="hscroll" style="left:17.6px;top:407.8px;width:484.4px;height:6.6px;background:#333;"></div>
<div class="a" id="status" style="left:0;top:414.2px;width:690px;height:11.8px;background:#2e2e2e;"></div>
<div class="a" style="left:168px;top:410px;width:177.8px;height:3.8px;background:#4e4e4e;border-radius:1px;"></div>
<div class="t" id="stxt" style="left:11.4px;top:417.5px;letter-spacing:0.14px;color:#c9c9c9;-webkit-text-stroke:0.2px currentColor;"><span class="b" style="-webkit-text-stroke:0.35px #fff;">ドラッグ</span>で新しい長方形シェイプを作成します。+<span style="display:inline-block;width:4.6px;height:4.6px;border-radius:50%;background:#f2f2f2;vertical-align:-0.7px;margin:0 0.3px;position:relative;"><span style="position:absolute;left:1.5px;top:1.2px;width:1.6px;height:2.2px;background:#2e2e2e;clip-path:polygon(50% 0,100% 50%,75% 50%,75% 100%,25% 100%,25% 50%,0 50%);"></span></span>で比率を固定します。+<span class="b">⌘</span>で、中心点から作成します。+<span class="b">^</span>で、ラインに沿って作成します。+<span class="b">⌥</span>でスナップを無視します。<span class="b" style="-webkit-text-stroke:0.35px #fff;">クリック</span><span style="letter-spacing:0.02px">でシェイプを選択し、シェイプのパラメータを変更します。+<span style="display:inline-block;width:4.6px;height:4.6px;border-radius:50%;background:#f2f2f2;vertical-align:-0.7px;margin:0 0.3px;position:relative;"><span style="position:absolute;left:1.5px;top:1.2px;width:1.6px;height:2.2px;background:#2e2e2e;clip-path:polygon(50% 0,100% 50%,75% 50%,75% 100%,25% 100%,25% 50%,0 50%);"></span></span>で選択を切り替えます。</span></div>

</div>
</body></html>
